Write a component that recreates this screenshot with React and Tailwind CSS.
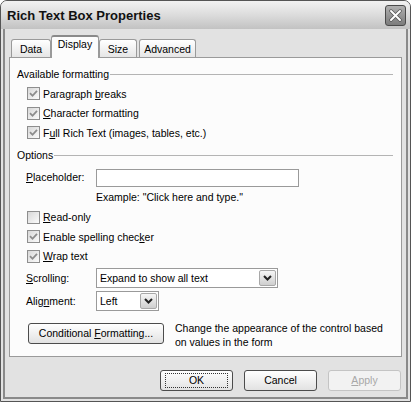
import React from "react";

const Check = ({ checked }) => (
  <span className="w-[13px] h-[13px] shrink-0 border border-[#8e8e8e] bg-linear-to-br from-[#d8d8d8] to-[#fbfbfb] flex items-center justify-center">
    {checked && (
      <svg width="9" height="9" viewBox="0 0 9 9">
        <path d="M1 4.2 L3.5 6.8 L8 1.8" stroke="#8c8c8c" strokeWidth="1.8" fill="none" />
      </svg>
    )}
  </span>
);

const CheckRow = ({ checked, children }) => (
  <div className="h-[19.5px] flex items-center gap-[3px] pl-[10px]">
    <Check checked={checked} />
    <span>{children}</span>
  </div>
);

const GroupHead = ({ children }) => (
  <div className="h-[19px] flex items-center">
    <span>{children}</span>
    <div className="flex-1 h-px bg-[#b4b4b4] ml-[1px]" />
  </div>
);

const Combo = ({ value, width }) => (
  <div className={`h-[20px] border border-[#9a9a9a] bg-white flex items-center justify-between pl-[3px] pr-[1px] ${width}`}>
    <span>{value}</span>
    <span className="w-[17px] h-[16px] rounded-[2px] border border-[#a8a8a8] bg-linear-to-b from-[#f6f6f6] to-[#cfcfcf] flex items-center justify-center">
      <svg width="9" height="6" viewBox="0 0 9 6">
        <path d="M1 1 L4.5 4.5 L8 1" stroke="#222" strokeWidth="2" fill="none" />
      </svg>
    </span>
  </div>
);

const Tab = ({ children, selected, w }) =>
  selected ? (
    <div className={`h-[23px] -mb-px -mx-[2px] z-10 rounded-t-[3px] border border-b-0 border-t-2 border-[#9a9a9a] border-t-[#8a8a8a] bg-[#fcfcfc] flex items-start justify-center pt-[2px] ${w}`}>
      {children}
    </div>
  ) : (
    <div className={`h-[18px] rounded-t-[3px] border border-b-0 border-[#9a9a9a] bg-linear-to-b from-white to-[#e6e6e6] flex items-center justify-center pt-[2px] ${w}`}>
      {children}
    </div>
  );

const Btn = ({ children, def, disabled }) => (
  <div
    className={`w-[73px] h-[21px] rounded-[3px] border flex items-center justify-center ${
      disabled
        ? "border-[#c4c4c4] bg-[#f2f2f2] text-[#a8a8a8]"
        : "border-[#4c4c4c] bg-linear-to-b from-white to-[#e2e2e2]"
    }`}
  >
    {def ? (
      <span className="w-[63px] h-[15px] border border-dotted border-[#333] flex items-center justify-center">
        {children}
      </span>
    ) : (
      children
    )}
  </div>
);

export default function App() {
  return (
    <div
      className="w-[411px] h-[402px] bg-white text-[10.5px] text-black leading-none"
      style={{ fontFamily: '"Liberation Sans", Arial, sans-serif' }}
    >
      <div className="w-full h-full flex flex-col border border-[#555] rounded-t-[7px] bg-[#e2e2e2] overflow-hidden">
        <div className="h-[28px] shrink-0 bg-linear-to-b from-[#f2f2f2] via-[#dcdcdc] to-[#c2c2c2] flex items-center justify-between pl-[6px] pr-[4px]">
          <span className="font-bold text-[13px] text-[#111]">Rich Text Box Properties</span>
          <span className="w-[21px] h-[21px] rounded-[3px] border border-[#4a4a4a] bg-linear-to-b from-[#b0b0b0] to-[#7c7c7c] flex items-center justify-center">
            <svg width="13" height="13" viewBox="0 0 13 13">
              <path d="M2 2 L11 11 M11 2 L2 11" stroke="#555" strokeWidth="3.4" strokeLinecap="round" />
              <path d="M2 2 L11 11 M11 2 L2 11" stroke="#fff" strokeWidth="2" strokeLinecap="round" />
            </svg>
          </span>
        </div>

        <div className="flex-1 mx-[2px] mb-[2px] border-x-2 border-b-2 border-[#8a8a8a] pt-[6px] pl-[4px] pr-[4px] flex flex-col">
          <div className="flex items-end gap-[2px] pl-[2px] h-[22px]">
            <Tab w="w-[40px]">Data</Tab>
            <Tab selected w="w-[48px]">Display</Tab>
            <Tab w="w-[38px]">Size</Tab>
            <Tab w="w-[57px]">Advanced</Tab>
          </div>

          <div className="h-[300px] border border-[#9a9a9a] bg-[#fcfcfc] pl-[7px] pr-[8px] pt-[7px] flex flex-col">
            <GroupHead>Available formatting</GroupHead>
            <CheckRow checked>
              Paragraph <u>b</u>reaks
            </CheckRow>
            <CheckRow checked>
              <u>C</u>haracter formatting
            </CheckRow>
            <CheckRow checked>
              F<u>u</u>ll Rich Text (images, tables, etc.)
            </CheckRow>

            <div className="mt-[3px]">
              <GroupHead>Options</GroupHead>
            </div>

            <div className="mt-[4px] h-[18px] flex items-center pl-[9px]">
              <span className="w-[70px]">
                <u>P</u>laceholder:
              </span>
              <div className="w-[203px] h-[18px] border border-[#9a9a9a] bg-white" />
            </div>
            <div className="mt-[4px] h-[14px] flex items-center pl-[79px]">
              Example: "Click here and type."
            </div>

            <div className="mt-[3px]">
              <CheckRow>
                <u>R</u>ead-only
              </CheckRow>
              <CheckRow checked>
                Enable spelling chec<u>k</u>er
              </CheckRow>
              <CheckRow checked>
                <u>W</u>rap text
              </CheckRow>
            </div>

            <div className="mt-[2px] flex items-center pl-[9px]">
              <span className="w-[70px]">
                <u>S</u>crolling:
              </span>
              <Combo value="Expand to show all text" width="w-[182px]" />
            </div>
            <div className="mt-[3px] flex items-center pl-[9px]">
              <span className="w-[70px]">
                Alig<u>n</u>ment:
              </span>
              <Combo value="Left" width="w-[63px]" />
            </div>

            <div className="mt-[12px] flex items-start pl-[11px] gap-[11px]">
              <div className="w-[136px] h-[21px] rounded-[3px] border border-[#4c4c4c] bg-linear-to-b from-white to-[#e2e2e2] flex items-center justify-center">
                <span>
                  Conditional <u>F</u>ormatting...
                </span>
              </div>
              <div className="leading-[14px] -mt-[2px]">
                Change the appearance of the control based
                <br />
                on values in the form
              </div>
            </div>
          </div>

          <div className="mt-[13px] flex justify-end gap-[11px] pr-[1px]">
            <Btn def>OK</Btn>
            <Btn>Cancel</Btn>
            <Btn disabled>
              <span>
                <u>A</u>pply
              </span>
            </Btn>
          </div>
        </div>
      </div>
    </div>
  );
}
